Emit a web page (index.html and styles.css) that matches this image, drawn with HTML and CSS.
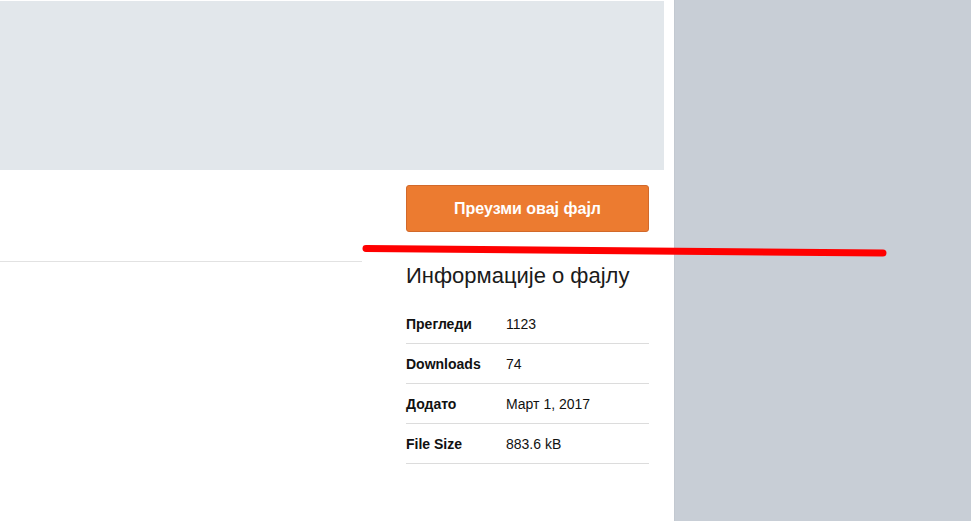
FILE: index.html
```html
<!DOCTYPE html>
<html lang="sr">
<head>
    <meta charset="UTF-8">
    <meta name="viewport" content="width=device-width, initial-scale=1.0">
    <title>Информације о фајлу</title>
    <link rel="stylesheet" href="styles.css">
</head>
<body>
    <div class="page">
        <main class="content">
            <div class="preview"></div>
            <div class="file-row">
                <div class="file-left"></div>
                <aside class="file-side">
                    <a href="#" class="download-btn">Преузми овај фајл</a>
                    <h2>Информације о фајлу</h2>
                    <table class="file-info">
                        <tr><th>Прегледи</th><td>1123</td></tr>
                        <tr><th>Downloads</th><td>74</td></tr>
                        <tr><th>Додато</th><td>Март 1, 2017</td></tr>
                        <tr><th>File Size</th><td>883.6 kB</td></tr>
                    </table>
                </aside>
            </div>
        </main>
        <div class="sidebar"></div>
    </div>

    <!-- marker stroke drawn over the page -->
    <svg class="marker" width="971" height="521" viewBox="0 0 971 521">
        <path d="M366 248.5 C 420 250.5, 600 252, 883 253" stroke="#ff0000" stroke-width="7" stroke-linecap="round" fill="none"/>
    </svg>
</body>
</html>
```

FILE: styles.css
```css
body {
    margin: 0;
    padding: 0;
    font-family: "Liberation Sans", Arial, sans-serif;
    color: #111;
    background-color: #c8ced6;
}
.page {
    display: flex;
    min-height: 521px;
}
.content {
    width: 674px;
    background-color: white;
    padding-top: 1px;
}
.sidebar {
    flex: 1;
    background-color: #c8ced6;
    border-left: 1px solid #c2c8d0;
}
.preview {
    width: 664px;
    height: 169px;
    background-color: #e2e7eb;
}
.file-row {
    display: flex;
    gap: 44px;
}
.file-left {
    width: 362px;
    height: 91px;
    border-bottom: 1px solid #e2e2e2;
}
.file-side {
    width: 243px;
    padding-top: 15px;
}
.download-btn {
    display: block;
    box-sizing: border-box;
    height: 47px;
    line-height: 45px;
    background-color: #ec7b30;
    border: 1px solid #d2692a;
    border-radius: 3px;
    color: white;
    font-weight: bold;
    font-size: 16px;
    text-align: center;
    text-decoration: none;
}
h2 {
    font-size: 22px;
    font-weight: normal;
    color: #1a1a1a;
    margin: 31px 0 15px 0;
    line-height: 26px;
}
.file-info {
    width: 100%;
    border-collapse: collapse;
    font-size: 14px;
}
.file-info th,
.file-info td {
    height: 39px;
    padding: 0;
    text-align: left;
    border-bottom: 1px solid #dcdcdc;
}
.file-info th {
    width: 100px;
    font-weight: bold;
}
.marker {
    position: absolute;
    left: 0;
    top: 0;
    pointer-events: none;
}
```
